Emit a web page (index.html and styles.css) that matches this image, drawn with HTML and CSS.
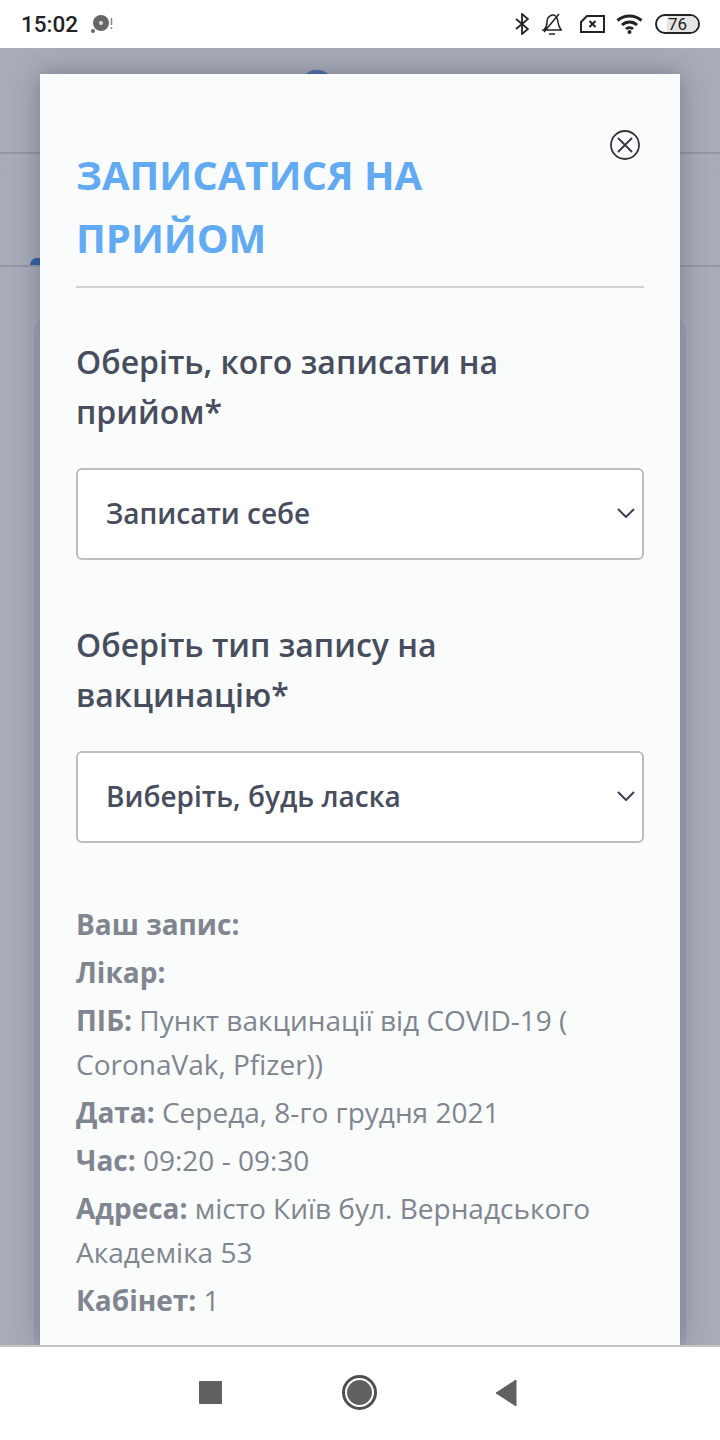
FILE: index.html
```html
<!DOCTYPE html>
<html lang="uk">
<head>
    <meta charset="UTF-8">
    <meta name="viewport" content="width=device-width, initial-scale=1.0">
    <title>Записатися на прийом</title>
    <link rel="stylesheet" href="styles.css">
</head>
<body>
    <div class="status-bar">
        <div class="status-left">
            <span class="status-time">15:02</span>
            <svg width="24" height="20" viewBox="0 0 24 20">
                <circle cx="11" cy="9" r="8" fill="#666"/>
                <circle cx="11" cy="9" r="2" fill="#ddd"/>
                <circle cx="3" cy="17" r="2" fill="#666"/>
                <path d="M21.500 4v7M21.500 13v2" stroke="#888" stroke-width="1.500"/>
            </svg>
        </div>
        <div class="status-right">
            <svg width="14" height="22" viewBox="0 0 14 22" fill="none" stroke="#222" stroke-width="1.800">
                <path d="M1 6l12 10-6 5V1l6 5L1 16"/>
            </svg>
            <svg class="icon-bell" width="22" height="22" viewBox="0 0 22 22" fill="none" stroke="#222" stroke-width="1.500">
                <path d="M1 17h20M3 17c2-2 3-5 3-8 0-3 2-6 5-7 3-.5 5 2 5.500 5 .5 4 1.500 7 3.500 10M8 21h6M3 19L18 1"/>
            </svg>
            <svg class="icon-sim" width="25" height="18" viewBox="0 0 25 18" fill="none" stroke="#222" stroke-width="2">
                <path d="M7 1h17v16H1V7zM9.500 6l6 6M15.500 6l-6 6"/>
            </svg>
            <svg width="27" height="20" viewBox="0 0 27 20" fill="none" stroke="#222" stroke-width="3">
                <path d="M1.500 6.500c7-6 17-6 24 0M6 11c4.500-4 10.500-4 15 0M10 15c2-1.800 5-1.800 7 0"/>
                <circle cx="13.500" cy="18" r="2" fill="#222" stroke="none"/>
            </svg>
            <div class="battery"><span class="battery-fill"></span><span class="battery-text">76</span></div>
        </div>
    </div>

    <div class="screen">
        <div class="page-header">
            <span class="page-logo"></span>
            <span class="page-logo-mark"></span>
        </div>
        <div class="page-tabs">
            <span class="tab-icon"></span>
        </div>
        <div class="page-card"></div>

        <div class="modal">
            <button class="close-btn" aria-label="Закрити">
                <svg width="32" height="32" viewBox="0 0 32 32" fill="none" stroke="#33363f" stroke-width="1.800">
                    <circle cx="16" cy="16" r="14"/>
                    <path d="M9 9l14 14M23 9L9 23"/>
                </svg>
            </button>
            <h1 class="modal-title">ЗАПИСАТИСЯ НА ПРИЙОМ</h1>

            <label class="field-label">Оберіть, кого записати на прийом*</label>
            <div class="select-box">
                <span>Записати себе</span>
                <svg width="18" height="10" viewBox="0 0 18 10" fill="none" stroke="#3d4152" stroke-width="2"><path d="M1 1l8 8 8-8"/></svg>
            </div>

            <label class="field-label">Оберіть тип запису на вакцинацію*</label>
            <div class="select-box">
                <span>Виберіть, будь ласка</span>
                <svg width="18" height="10" viewBox="0 0 18 10" fill="none" stroke="#3d4152" stroke-width="2"><path d="M1 1l8 8 8-8"/></svg>
            </div>

            <div class="summary">
                <p><b>Ваш запис:</b></p>
                <p><b>Лікар:</b></p>
                <p><b>ПІБ:</b> Пункт вакцинації від COVID-19 ( CoronaVak, Pfizer))</p>
                <p><b>Дата:</b> Середа, 8-го грудня 2021</p>
                <p><b>Час:</b> 09:20 - 09:30</p>
                <p><b>Адреса:</b> місто Київ бул. Вернадського Академіка 53</p>
                <p><b>Кабінет:</b> 1</p>
            </div>
        </div>
    </div>

    <div class="nav-bar">
        <span class="nav-square"></span>
        <span class="nav-home"><span class="nav-home-dot"></span></span>
        <svg width="22" height="28" viewBox="0 0 22 28"><path d="M21 1v26L1 14z" fill="#606060" stroke="#606060" stroke-width="1" stroke-linejoin="round"/></svg>
    </div>
</body>
</html>
```

FILE: styles.css
```css
* {
    box-sizing: border-box;
    margin: 0;
    padding: 0;
}

body {
    font-family: "Open Sans", "Noto Sans", sans-serif;
    width: 720px;
    height: 1440px;
    display: flex;
    flex-direction: column;
    overflow: hidden;
    background: white;
}

.status-bar {
    height: 48px;
    background: white;
    display: flex;
    justify-content: space-between;
    align-items: center;
    padding: 0 20px 0 21px;
}

.status-left {
    display: flex;
    align-items: center;
    gap: 12px;
}

.status-time {
    font-family: Roboto, sans-serif;
    font-size: 22.500px;
    font-weight: 500;
    color: #222;
}

.status-right {
    display: flex;
    align-items: center;
    gap: 12px;
}

.icon-bell {
    margin-right: 5px;
}

.icon-sim {
    margin-right: -1px;
}

.battery {
    position: relative;
    width: 45px;
    height: 20px;
    border: 2px solid #222;
    border-radius: 10px;
    overflow: hidden;
}

.battery-fill {
    position: absolute;
    right: 0;
    top: 0;
    bottom: 0;
    width: 76%;
    background: #e4e4e4;
}

.battery-text {
    position: relative;
    display: block;
    text-align: center;
    font-family: Roboto, sans-serif;
    font-size: 17px;
    line-height: 16px;
    color: #222;
}

.screen {
    position: relative;
    height: 1297px;
    background: #a8acb8;
    overflow: hidden;
}

.page-header {
    display: flex;
    align-items: flex-start;
    height: 106px;
    padding: 22px 0 0 299px;
    border-bottom: 2px solid #9195a5;
}

.page-logo {
    width: 36px;
    height: 36px;
    border-radius: 50%;
    background: #4b6ea8;
}

.page-logo-mark {
    width: 6px;
    height: 6px;
    margin: 24px 0 0 91px;
    border-radius: 50%;
    background: #3d4a68;
}

.page-tabs {
    display: flex;
    align-items: flex-end;
    height: 98px;
    margin-top: 15px;
    padding-left: 30px;
    border-top: 1px solid #a4a8b4;
    border-bottom: 2px solid #9498a8;
}

.tab-icon {
    width: 20px;
    height: 7px;
    border-radius: 10px 10px 0 0;
    background: #2f5f9e;
}

.page-card {
    height: 1100px;
    margin: 49px 32px 0;
    background: #a2a5b3;
    border: 1px solid #b0b3be;
    border-radius: 16px;
}

.modal {
    position: absolute;
    left: 40px;
    top: 26px;
    width: 640px;
    height: 1271px;
    padding: 0 36px;
    background: #fafbfb;
    box-shadow: 0 0 24px rgba(60, 64, 80, 0.45);
    color: #484d5e;
}

.close-btn {
    position: absolute;
    top: 55px;
    right: 39px;
    width: 32px;
    height: 32px;
    background: none;
    border: none;
}

.modal-title {
    margin-top: 69px;
    padding: 0 170px 17px 0;
    border-bottom: 2px solid #d0d2d9;
    font-size: 40px;
    line-height: 63px;
    font-weight: 700;
    color: #62aaf2;
}

.field-label {
    display: block;
    margin-top: 49px;
    font-size: 32px;
    line-height: 50px;
    font-weight: 600;
}

.select-box {
    display: flex;
    justify-content: space-between;
    align-items: center;
    height: 92px;
    margin-top: 31px;
    padding: 0 7px 2px 28px;
    background: white;
    border: 2px solid #bdbdbd;
    border-radius: 6px;
    font-size: 28px;
    font-weight: 600;
}

.select-box + .field-label {
    margin-top: 60px;
}

.summary {
    margin-top: 59px;
    font-size: 28px;
    line-height: 44px;
    color: #81858f;
}

.summary p {
    margin-bottom: 4px;
}

.nav-bar {
    flex: 1;
    display: flex;
    justify-content: center;
    align-items: center;
    gap: 118px;
    padding: 0 4px 2px 0;
    background: white;
    border-top: 2px solid #c4c4c4;
}

.nav-square {
    width: 23px;
    height: 23px;
    margin-right: 2px;
    background: #606060;
    border-radius: 1px;
}

.nav-home {
    display: flex;
    justify-content: center;
    align-items: center;
    width: 35px;
    height: 35px;
    border: 3px solid #505050;
    border-radius: 50%;
}

.nav-home-dot {
    width: 25px;
    height: 25px;
    background: #606060;
    border-radius: 50%;
}
```
